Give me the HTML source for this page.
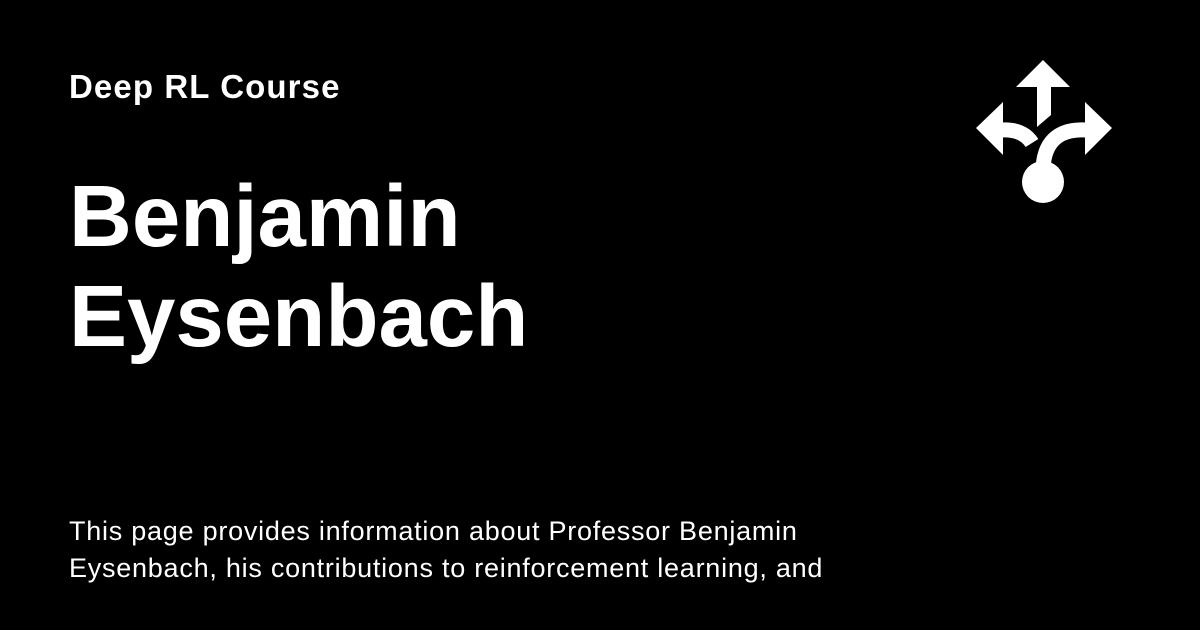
<!DOCTYPE html>
<html><head><meta charset="utf-8"><style>
html,body{margin:0;padding:0;background:#000;width:1200px;height:630px;overflow:hidden}
body{position:relative;color:#fff;font-family:"Liberation Sans","DejaVu Sans",sans-serif}
.t{position:absolute;left:69px;white-space:nowrap}
.h{top:68px;font-size:33px;font-weight:bold;letter-spacing:1.1px}
.n{top:167px;font-size:87px;font-weight:bold;line-height:100px}
.d{top:513px;font-size:27px;line-height:37px;letter-spacing:0.75px}
</style></head><body>
<div class="t h">Deep RL Course</div>
<div class="t n">Benjamin<br>Eysenbach</div>
<div class="t d">This page provides information about Professor Benjamin<br>Eysenbach, his contributions to reinforcement learning, and</div>
<svg style="position:absolute;left:0;top:0" width="1200" height="630">
<g fill="#fff" stroke="none">
<polygon points="1043,60 1070,87 1016,87"/>
<polygon points="1037,86 1051,86 1051,115 1037,127"/>
<polygon points="976,128 1003,102 1003,155"/>
<polygon points="1112,128 1085,102 1085,155"/>
<circle cx="1043" cy="182" r="21"/>
</g>
<g fill="none" stroke="#fff" stroke-width="15">
<path d="M1086,130 Q1043,128 1043,172"/>
<path d="M1002,130 Q1023,129 1032,143"/>
</g>
</svg>
</body></html>
